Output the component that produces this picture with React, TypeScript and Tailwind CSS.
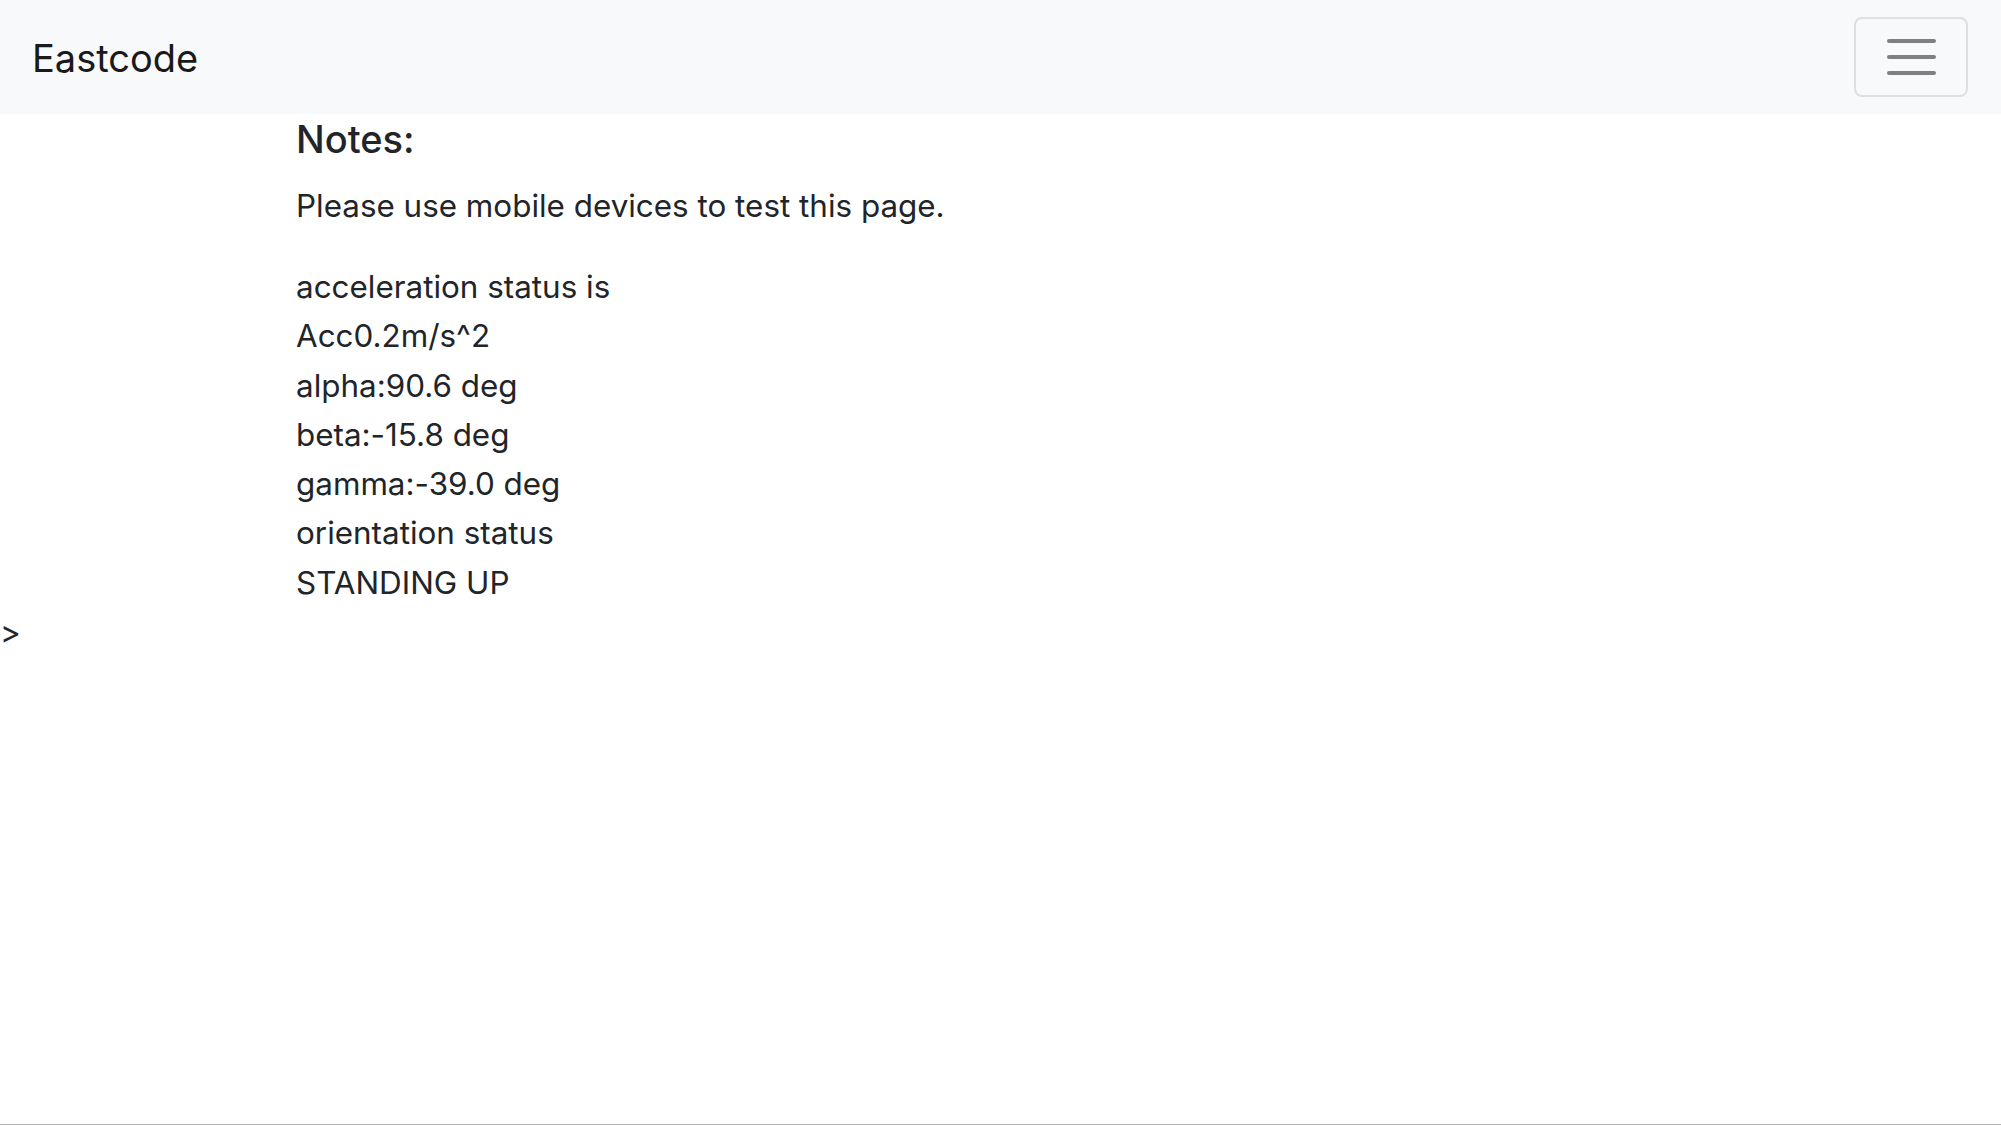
import React from "react";

export default function App() {
  const lines = [
    "acceleration status is",
    "Acc0.2m/s^2",
    "alpha:90.6 deg",
    "beta:-15.8 deg",
    "gamma:-39.0 deg",
    "orientation status",
    "STANDING UP",
  ];
  return (
    <div
      className="w-[2001px] h-[1125px] bg-white flex flex-col text-[#212529] overflow-hidden"
      style={{ fontFamily: "Inter, 'Noto Sans', sans-serif" }}
    >
      <nav className="h-[114px] shrink-0 bg-[#f8f9fa] flex items-center justify-between pl-[32px] pr-[33px]">
        <span className="text-[38px] leading-[50px] pt-[2px] text-[#1a1a1a]">Eastcode</span>
        <button className="w-[114px] h-[80px] border-2 border-[#dedfe0] rounded-[8px] flex flex-col items-center justify-center gap-[12px]">
          <span className="block w-[49px] h-[4px] rounded-full bg-[#808080]" />
          <span className="block w-[49px] h-[4px] rounded-full bg-[#808080]" />
          <span className="block w-[49px] h-[4px] rounded-full bg-[#808080]" />
        </button>
      </nav>
      <main className="flex-1 flex flex-col">
        <div className="pl-[296px] pt-[3px]">
          <h5 className="text-[38px] leading-[44px] font-medium">Notes:</h5>
          <p className="mt-[21px] text-[31.4px] leading-[48px]">
            Please use mobile devices to test this page.
          </p>
          <div className="mt-[33px] text-[31.4px] leading-[49.3px]">
            {lines.map((l) => (
              <div key={l}>{l}</div>
            ))}
          </div>
        </div>
        <div className="text-[31.4px] leading-[49px]">&gt;</div>
      </main>
      <div className="h-[1px] shrink-0 bg-[#b4b4b4]" />
    </div>
  );
}
